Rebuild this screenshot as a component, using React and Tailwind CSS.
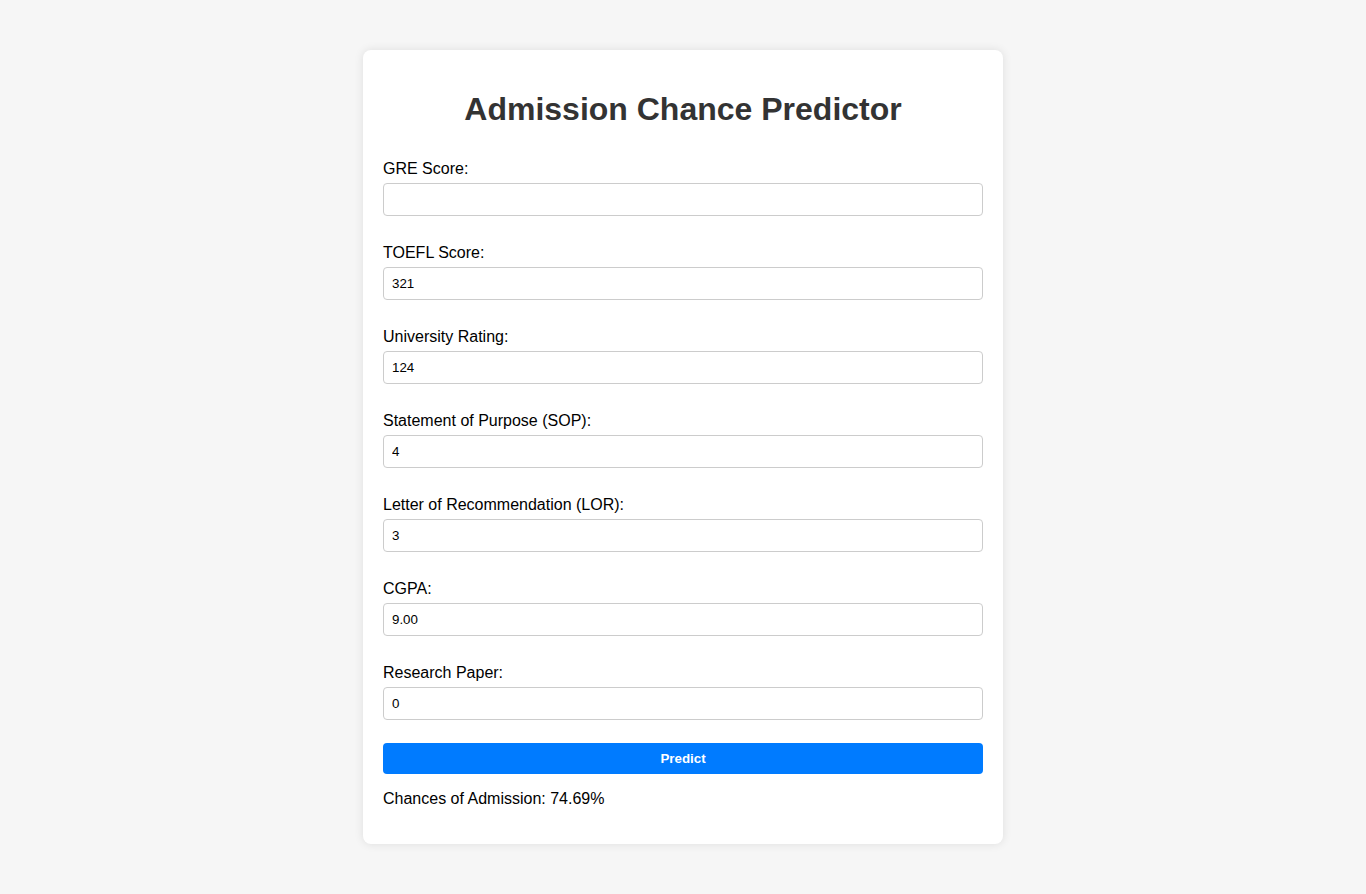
import React from "react";

const fields = [
  { label: "GRE Score:", value: "" },
  { label: "TOEFL Score:", value: "321" },
  { label: "University Rating:", value: "124" },
  { label: "Statement of Purpose (SOP):", value: "4" },
  { label: "Letter of Recommendation (LOR):", value: "3" },
  { label: "CGPA:", value: "9.00" },
  { label: "Research Paper:", value: "0" },
];

export default function App() {
  return (
    <div
      className="min-h-[894px] bg-[#f6f6f6] pt-[50px] pb-[50px]"
      style={{ fontFamily: '"Liberation Sans", Arial, sans-serif' }}
    >
      <div className="mx-auto w-[640px] rounded-[8px] bg-white p-[20px] shadow-[0_0_10px_rgba(0,0,0,0.1)]">
        <h1 className="mt-[21px] mb-[32px] text-center text-[32px] font-bold leading-[37px] text-[#333]">
          Admission Chance Predictor
        </h1>
        <form onSubmit={(e) => e.preventDefault()}>
          {fields.map((f) => (
            <div key={f.label} className="mb-[28px]">
              <label className="mb-[5px] block text-[16px] leading-[18px] text-black">
                {f.label}
              </label>
              <input
                type="text"
                defaultValue={f.value}
                className="block h-[33px] w-full rounded-[4px] border border-[#ccc] px-[8px] text-[13.33px] text-black outline-none"
                style={{ fontFamily: '"Liberation Sans", Arial, sans-serif' }}
              />
            </div>
          ))}
          <button
            type="submit"
            className="-mt-[5px] block h-[31px] w-full rounded-[4px] bg-[#007bff] text-[13.33px] font-bold text-white"
            style={{ fontFamily: '"Liberation Sans", Arial, sans-serif' }}
          >
            Predict
          </button>
        </form>
        <p className="mt-[16px] mb-[16px] text-[16px] leading-[18px] text-black">
          Chances of Admission: 74.69%
        </p>
      </div>
    </div>
  );
}
